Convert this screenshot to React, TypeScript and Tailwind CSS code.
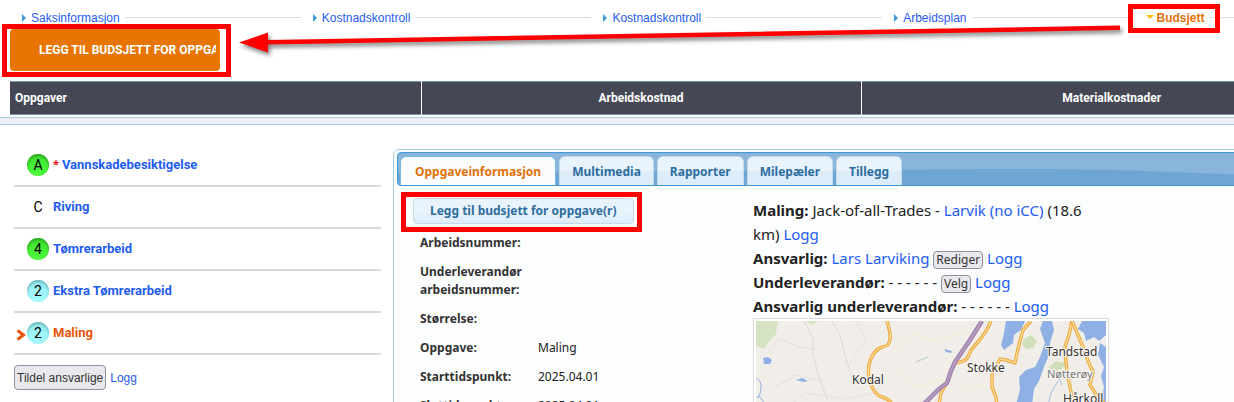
import React from "react";

const navItems = ["Saksinformasjon", "Kostnadskontroll", "Kostnadskontroll", "Arbeidsplan"];

const tasks = [
  { badge: "A", name: "Vannskadebesiktigelse", color: "green", required: true },
  { badge: "C", name: "Riving", color: "none" },
  { badge: "4", name: "Tømrerarbeid", color: "green" },
  { badge: "2", name: "Ekstra Tømrerarbeid", color: "blue" },
  { badge: "2", name: "Maling", color: "blue", active: true },
];

const tabs = ["Oppgaveinformasjon", "Multimedia", "Rapporter", "Milepæler", "Tillegg"];

const details = [
  ["Arbeidsnummer:", ""],
  ["Underleverandør arbeidsnummer:", ""],
  ["Størrelse:", ""],
  ["Oppgave:", "Maling"],
  ["Starttidspunkt:", "2025.04.01"],
  ["Sluttidspunkt:", "2025.04.01"],
];

const badgeColors: Record<string, string> = {
  green: "bg-linear-to-b from-[#3fe02f] to-[#4dfc3c] shadow-[inset_0_2px_3px_#2fa524]",
  blue: "bg-linear-to-b from-[#97ecf2] to-[#a6fbff] shadow-[inset_0_2px_3px_#6fb4ba]",
  none: "",
};

// Main roads on the map, drawn as an orange casing with a lighter core
const roads = [
  "M131 0C133 8 135 12 134 18S132 25 126 26C118 29 114 38 113 44S112 55 114 61S120 74 126 76S137 80 140 95",
  "M235 0C232 8 228 14 222 21S214 29 213 34C210 41 205 41 199 42",
  "M190 63L185 72L181 95",
  "M275 0L267 9L264 20L261 32L259 42L250 39L244 38L240 46L236 52L236 66L240 76L242 95",
  "M316 0L313 14L309 26L310 42L312 56L316 76L317 95",
  "M316 0L322 14L327 26L332 40L337 51L334 64L342 76L350 84",
];

const places = [
  { name: "Kodal", x: 96, y: 63 },
  { name: "Stokke", x: 211, y: 51 },
  { name: "Tandstad", x: 290, y: 35 },
  { name: "Hårkoll", x: 307, y: 82 },
];

function Highlight({ className }: { className: string }) {
  return <span className={`pointer-events-none absolute z-10 border-5 border-[#ff0000] ${className}`} />;
}

function Link({ children }: { children: React.ReactNode }) {
  return (
    <a href="#" className="text-[#1f5cf0]">
      {children}
    </a>
  );
}

function SmallButton({ children }: { children: React.ReactNode }) {
  return (
    <button className="rounded border border-[#8f8f9d] bg-[#e9e9ed] px-0.5 text-xs leading-4 text-[#333]">
      {children}
    </button>
  );
}

function TopNav() {
  return (
    <nav className="flex h-[29px] items-center overflow-hidden pt-1.5 pl-[22px] font-['Liberation_Sans',sans-serif] text-xs whitespace-nowrap">
      {navItems.map((item, i) => (
        <React.Fragment key={i}>
          <a href="#" className="flex shrink-0 items-center gap-[5px] text-[#1f5cf0]">
            <svg width="4" height="8" viewBox="0 0 4 8">
              <path d="M0 0L4 4L0 8Z" fill="#3d98d8" />
            </svg>
            {item}
          </a>
          <span
            className={`mr-3 ml-[5px] h-px shrink-0 bg-[#dcdcdc] ${i === navItems.length - 1 ? "w-[162px]" : "w-44"}`}
          />
        </React.Fragment>
      ))}
      <a href="#" className="flex shrink-0 items-center gap-[3px] font-bold text-[#e17009]">
        <svg width="8" height="8" viewBox="0 0 8 8">
          <path d="M0 1H8L4 5Z" fill="#fdb913" />
        </svg>
        Budsjett
      </a>
      <span className="ml-[5px] h-px w-44 shrink-0 bg-[#dcdcdc]" />
    </nav>
  );
}

function PointerArrow() {
  return (
    <svg
      className="pointer-events-none absolute top-0 left-[230px] z-10 overflow-visible drop-shadow-[2px_3px_2px_rgba(0,0,0,0.5)]"
      width="900"
      height="60"
    >
      <path d="M890 25.5L38 40V32.5L9 42.5L38 52.500V44.500L890 30Z" fill="#ff0000" />
    </svg>
  );
}

function TaskList() {
  return (
    <aside className="w-[367px] shrink-0 pt-5">
      <ul>
        {tasks.map((task) => (
          <li key={task.name} className="flex h-[42px] items-center border-b-2 border-[#dadada] text-[13px]">
            <span className="flex w-[13px] shrink-0 justify-center pt-1">
              {task.active && (
                <svg width="10" height="12" viewBox="0 0 10 12">
                  <path d="M1.500 1.500L7.500 6L1.500 10.500" fill="none" stroke="#e8540a" strokeWidth="3" />
                </svg>
              )}
            </span>
            <span className={`mr-1 flex size-[22px] items-center justify-center rounded-full text-sm text-black ${badgeColors[task.color]}`}>
              {task.badge}
            </span>
            {task.required && <span className="mr-[3px] font-bold text-[#f00]">*</span>}
            <a href="#" className={task.active ? "font-bold text-[#e8540a]" : "font-bold text-[#1f5cf0]"}>
              {task.name}
            </a>
          </li>
        ))}
      </ul>
      <div className="flex items-center gap-1 pt-2.5 font-['Liberation_Sans',sans-serif] text-xs">
        <button className="h-[25px] rounded border border-[#8f8f9d] bg-[#e9e9ed] px-0.5 text-[#333]">
          Tildel ansvarlige
        </button>
        <Link>Logg</Link>
      </div>
    </aside>
  );
}

function AreaMap() {
  return (
    <div className="border border-[#dadada] bg-white p-0.5">
      <svg viewBox="0 0 350 150" className="block w-full">
        <rect width="350" height="150" fill="#f1eee9" />
        <g fill="#cfe0b8">
          <path d="M0 0H22L20 13L12 22L8 28L0 25Z" opacity="0.8" />
          <path d="M268 18L275 14L281 20L277 27L270 28L266 23Z" />
          <path d="M293 46L300 40L310 42L306 48L296 50Z" />
          <path d="M50 0H62L56 4Z" opacity="0.7" />
        </g>
        <g fill="#8fb0e4">
          <path d="M250 0H269L265 9L258 14L257 22L248 29L245 24L248 12Z" />
          <path d="M287 0H296L298 9L294 22L293 34L288 46L283 60L278 68L276 84L278 150H252L260 84L264 68L263 56L270 49L279 46L284 36L289 22L284 8Z" />
          <path d="M326 0H350V14L343 20L338 16L330 20L328 12L322 8Z" />
          <path d="M344 22L350 26V90L346 78L348 66L345 55L348 46L342 34Z" />
          <path d="M7 37L12 36L16 39L14 43L8 43Z" />
          <path d="M40 59L46 57L52 60L48 61Z" />
          <path d="M188 28L196 30L195 32L190 31Z" />
        </g>
        <g fill="none" stroke="#8fb0e4">
          <path d="M0 57Q6 60 5 68T1 76Q8 76 7 84" />
          <path d="M302 60L295 72L292 85M303 58L306 64" strokeWidth="0.8" />
          <path d="M160 41L172 36" stroke="#a9c3b0" strokeWidth="0.8" />
        </g>
        <g fill="none" stroke="#d8cfdc" strokeWidth="0.8">
          <path d="M48 0L57 18V34L63 56L72 80" />
          <path d="M76 0L84 14L90 38L97 60" />
          <path d="M12 30L24 18L44 26L60 28M18 66L40 54L66 60" stroke="#dedbd5" />
          <path d="M138 26L158 14L180 20L210 10M140 50L160 66L186 58M205 70L230 62" stroke="#f5e6c8" />
          <path d="M100 0L110 20L92 44M20 95L50 72L88 78L118 72" stroke="#e3dfd8" />
        </g>
        <g fill="none" strokeLinejoin="round">
          {roads.map((d) => (
            <g key={d}>
              <path d={d} stroke="#efae45" strokeWidth="3.5" />
              <path d={d} stroke="#fde9b4" strokeWidth="1" />
            </g>
          ))}
          <path d="M226 0L214 19L199 41L195 50L191 62L183 68L169 82L158 88" stroke="#9f82ac" strokeWidth="4.5" />
          <path d="M226 0L214 19L199 41L195 50L191 62L183 68L169 82L158 88" stroke="#b79cc2" strokeWidth="2" />
        </g>
        <g fontSize="12" fill="#333" stroke="#f8f6f2" strokeWidth="2" paintOrder="stroke">
          {places.map((p) => (
            <text key={p.name} x={p.x} y={p.y}>
              {p.name}
            </text>
          ))}
          <text x="291" y="57" fontSize="11" fill="#777">
            Nøtterøy
          </text>
        </g>
      </svg>
    </div>
  );
}

function TaskPanel() {
  return (
    <section className="min-w-0 flex-1 pt-6 font-['Noto_Sans',sans-serif]">
      <div className="-mr-4 rounded-md border border-[#a6c9e2] bg-[#fcfdfd] p-[3px] pt-0.5">
        <div className="relative h-[34px] overflow-hidden rounded border border-[#4297d7] bg-[#8ab5da]">
          <svg className="absolute inset-0 h-full w-full" viewBox="0 0 840 32" preserveAspectRatio="none">
            <path d="M0 20C200 20 500 16 620 16S780 21 840 21V32H0Z" fill="#6fa5d2" />
          </svg>
          <div role="tablist" className="relative flex gap-[3px] pt-[3px] pl-0.5 text-xs font-bold">
            {tabs.map((tab, i) => (
              <button
                key={tab}
                role="tab"
                aria-selected={i === 0}
                className={`h-[30px] rounded-t-md border border-b-0 ${
                  i === 0
                    ? "border-[#79b7e7] bg-[#fafcfd] px-3.5 text-[#e17009]"
                    : "border-[#c5dbec] bg-linear-to-b from-[#e9f3fc] from-50% to-[#dcecf9] to-50% px-3 text-[#2e6e9e]"
                }`}
              >
                {tab}
              </button>
            ))}
          </div>
        </div>
        <div className="flex pl-4">
          <div className="w-[340px] shrink-0 pt-[11px]">
            <div className="relative inline-block">
              <button className="block h-[26px] rounded border border-[#c5dbec] bg-linear-to-b from-[#e9f3fc] from-50% to-[#dcecf9] px-4 text-xs font-bold text-[#2e6e9e]">
                Legg til budsjett for oppgave(r)
              </button>
              <Highlight className="-top-1.5 -right-2 -bottom-2 -left-3" />
            </div>
            <dl className="pt-[5px] pl-[7px] text-xs">
              {details.map(([label, value]) => (
                <div key={label} className="flex pt-[5px] pb-1.5 leading-[18px]">
                  <dt className="w-[118px] shrink-0 font-bold text-[#333]">{label}</dt>
                  <dd className="text-[#222]">{value}</dd>
                </div>
              ))}
            </dl>
          </div>
          <div className="w-[356px] pt-3 text-[15px] leading-6 text-[#222]">
            <p>
              <b>Maling:</b> Jack-of-all-Trades - <Link>Larvik (no iCC)</Link> (18.6 km) <Link>Logg</Link>
            </p>
            <p>
              <b>Ansvarlig:</b> <Link>Lars Larviking</Link> <SmallButton>Rediger</SmallButton> <Link>Logg</Link>
            </p>
            <p>
              <b>Underleverandør:</b> - - - - - - <SmallButton>Velg</SmallButton> <Link>Logg</Link>
            </p>
            <p>
              <b>Ansvarlig underleverandør:</b> - - - - - - <Link>Logg</Link>
            </p>
            <AreaMap />
          </div>
        </div>
      </div>
    </section>
  );
}

export default function App() {
  return (
    <div className="relative h-screen overflow-hidden bg-white font-[Roboto,sans-serif]">
      <TopNav />
      <Highlight className="top-1 left-[1128px] h-[29px] w-[92px]" />
      <PointerArrow />
      <div className="pl-2.5">
        <div className="relative w-[210px]">
          <button className="block h-[42px] w-full rounded bg-[#e87500] pr-1 pl-[29px] text-left text-xs font-bold whitespace-nowrap text-white uppercase">
            <span className="block overflow-hidden">Legg til budsjett for oppgave(r)</span>
          </button>
          <Highlight className="-top-[5px] -right-[11px] -bottom-1.5 -left-2" />
        </div>
      </div>
      <div className="overflow-hidden pt-2.5 pl-2.5">
        <table className="w-[1352px] table-fixed border-y border-[#7295b0] bg-[#454854] text-xs text-white">
          <thead>
            <tr className="h-[33px]">
              <th className="w-[411px] border-r border-white px-[5px] text-left">Oppgaver</th>
              <th className="w-[440px] border-r border-white">Arbeidskostnad</th>
              <th>Materialkostnader</th>
            </tr>
          </thead>
        </table>
      </div>
      <div className="mt-0.5 h-2 border-y border-[#a6c9e2] bg-[#eef0f5]" />
      <main className="flex gap-3 pl-3.5">
        <TaskList />
        <TaskPanel />
      </main>
    </div>
  );
}
